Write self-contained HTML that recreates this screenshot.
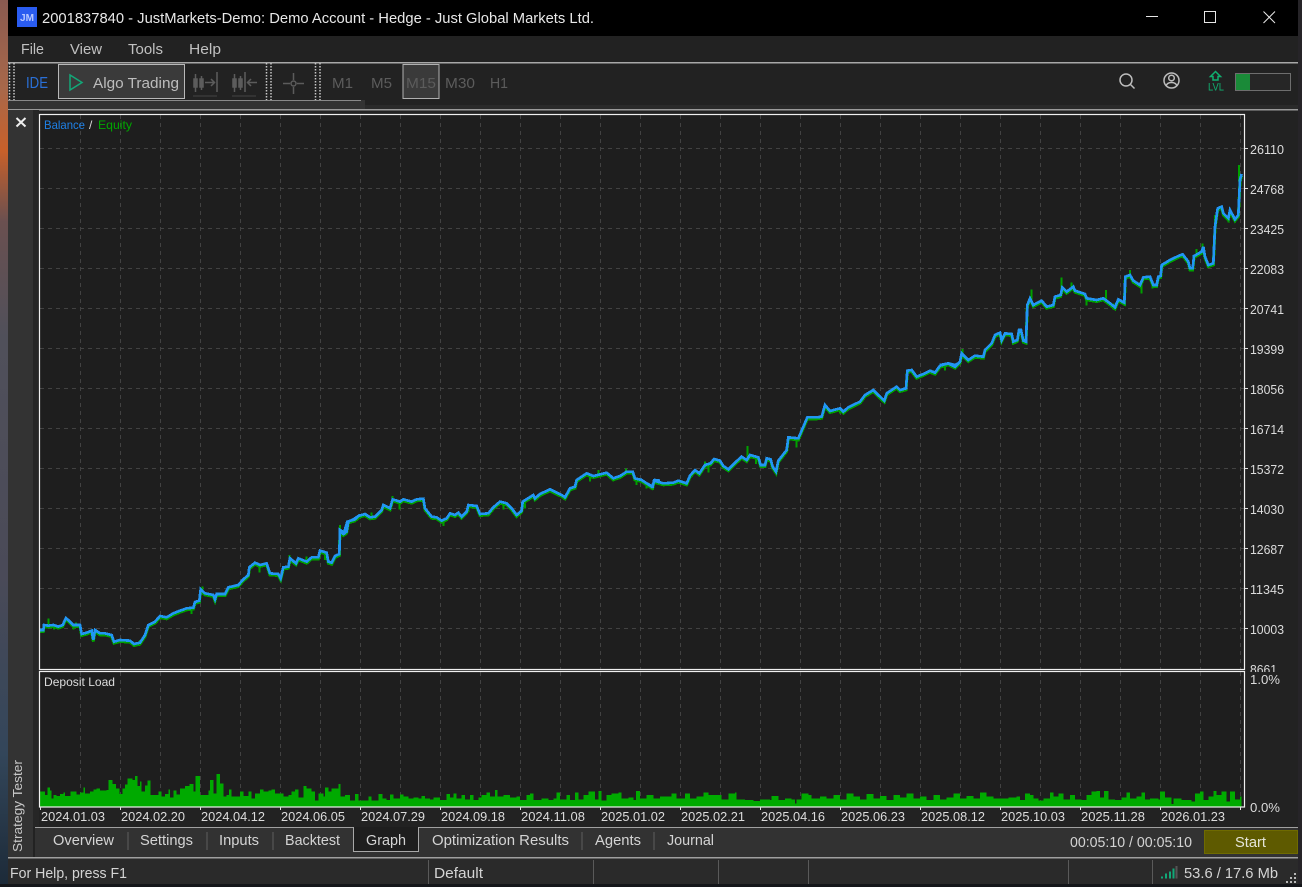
<!DOCTYPE html>
<html><head><meta charset="utf-8"><style>
html,body{margin:0;padding:0;background:#111;width:1302px;height:887px;overflow:hidden}
svg{display:block}
text{font-family:"Liberation Sans",sans-serif;white-space:pre}
.t{font-size:14.5px;fill:#d4d4d4}
.a{font-size:12.5px;fill:#dcdcdc}
.g{font-size:14.5px;fill:#5c5c5c}
</style></head><body>
<svg width="1302" height="887" viewBox="0 0 1302 887" xmlns="http://www.w3.org/2000/svg">
<defs>
<linearGradient id="wp" x1="0" y1="0" x2="0" y2="1">
<stop offset="0" stop-color="#8a5a50"/><stop offset=".1" stop-color="#a8684a"/><stop offset=".17" stop-color="#c8602a"/><stop offset=".25" stop-color="#6a5050"/><stop offset=".38" stop-color="#50505a"/><stop offset=".65" stop-color="#4a4a58"/><stop offset=".85" stop-color="#33465a"/><stop offset="1" stop-color="#1c2a38"/>
</linearGradient>
<polyline id="c1" fill="none" points="0,450 10,450 12,435 25,437 40,435 55,440 68,435 78,414 90,425 100,435 120,435 125,462 140,458 155,452 160,480 165,450 180,460 195,460 215,465 222,485 240,480 270,482 282,492 300,488 315,465 325,435 345,425 360,408 380,412 400,400 420,392 440,385 460,383 465,366 478,362 482,328 495,340 520,345 525,358 530,342 555,342 565,322 595,315 610,298 625,285 628,262 645,248 660,255 680,250 690,280 715,282 722,295 730,262 745,260 750,235 768,250 775,235 800,245 815,232 835,232 840,212 860,218 865,245 875,248 885,228 898,222 900,150 912,158 922,125 945,118 960,104"/>
<polyline id="c2" fill="none" points="0,335 10,342 20,335 25,305 40,298 55,288 75,282 90,292 105,290 125,270 130,255 150,265 158,238 180,245 190,238 215,245 230,238 250,236 255,265 275,290 290,292 305,302 320,295 330,280 345,285 355,278 365,290 380,275 385,255 410,258 420,282 445,280 460,262 480,245 500,250 515,265 530,285 545,272 548,245 580,225 585,235 600,222 630,208 665,225 675,232 690,205 705,200 710,180 740,160 760,168 800,158 820,175 840,168 860,155 878,155 885,175 905,180 935,200 945,180 960,182"/>
<polyline id="c3" fill="none" points="0,447 20,460 38,470 42,452 70,460 100,458 115,452 140,460 150,437 165,420 178,430 195,405 212,400 222,387 240,392 250,408 265,418 285,398 305,380 320,390 330,375 355,382 362,405 375,405 380,385 392,388 398,410 408,425 415,392 440,360 445,322 475,325 490,290 502,262 520,262 530,262 545,260 555,225 570,243 600,235 610,245 625,232 660,215 675,195 700,180 715,195 733,212 740,190 770,170 780,180 798,175 802,122 815,120 830,140 850,132 870,122 885,128 900,107 925,100 945,105 960,97"/>
<polyline id="c4" fill="none" points="0,645 25,640 45,650 60,635 65,610 85,630 105,617 130,620 135,600 155,580 165,555 180,548 185,570 195,550 215,552 220,575 232,570 237,540 243,540 250,572 258,575 262,465 270,445 280,465 305,452 320,470 340,465 345,440 362,435 367,412 380,425 400,410 405,422 435,432 440,445 470,450 490,445 510,460 525,472 535,448 553,458 556,380 570,375 580,392 600,405 610,382 630,380 640,405 650,405 655,380 662,378 665,345 690,330 715,318 728,313 745,335 750,355 758,355 762,318 785,305 790,290 795,320 805,345 820,340 825,230 833,175 845,170 850,190 865,205 870,180 885,208 895,195 900,90 905,72"/>
</defs>

<rect width="1302" height="887" fill="#17171a"/>
<rect x="0" y="0" width="8" height="887" fill="url(#wp)"/>
<rect x="1298" y="0" width="4" height="887" fill="#262428"/>
<rect x="0" y="884" width="1302" height="3" fill="#14161a"/>

<!-- window -->
<rect x="8" y="0" width="1290" height="884" fill="#222"/>
<rect x="8" y="0" width="1290" height="36" fill="#000"/>
<rect x="17" y="7" width="20" height="20" fill="#2a5cf0"/>
<text x="20" y="21" style="font-size:10px;font-weight:bold;fill:#b8c8ff" textLength="14" lengthAdjust="spacingAndGlyphs">JM</text>
<text x="42" y="23" style="font-size:15px;fill:#e8e8e8" textLength="552" lengthAdjust="spacingAndGlyphs">2001837840 - JustMarkets-Demo: Demo Account - Hedge - Just Global Markets Ltd.</text>
<path d="M1146 16.5H1158" stroke="#e6e6e6" stroke-width="1" fill="none"/>
<rect x="1204.5" y="11.5" width="11" height="11" stroke="#e6e6e6" stroke-width="1" fill="none"/>
<path d="M1263.5 11.5L1275 23M1275 11.5L1263.5 23" stroke="#e6e6e6" stroke-width="1" fill="none"/>

<!-- menu -->
<text class="t" x="21" y="54" textLength="23" lengthAdjust="spacingAndGlyphs" style="fill:#c0c0c0">File</text>
<text class="t" x="70" y="54" textLength="32" lengthAdjust="spacingAndGlyphs" style="fill:#c0c0c0">View</text>
<text class="t" x="128" y="54" textLength="35" lengthAdjust="spacingAndGlyphs" style="fill:#c0c0c0">Tools</text>
<text class="t" x="189" y="54" textLength="32" lengthAdjust="spacingAndGlyphs" style="fill:#c0c0c0">Help</text>

<!-- toolbar -->
<rect x="8" y="62" width="1290" height="1.5" fill="#a8a8a8"/>
<rect x="8" y="100" width="357" height="9" fill="#333"/>
<rect x="365" y="105" width="933" height="4" fill="#2a2a2a"/>
<rect x="8" y="100" width="353" height="1" fill="#8a8a8a"/>
<rect x="8" y="109" width="1290" height="1.5" fill="#9a9a9a"/>
<path d="M9.5 63V100M14 63V100M266.5 63V100M271 63V100M315.5 63V100M320 63V100" stroke="#c8c8c8" stroke-width="1.5" stroke-dasharray="1.5 1.5" fill="none"/>
<text x="26" y="88" style="font-size:16px;fill:#2a70d8" textLength="22" lengthAdjust="spacingAndGlyphs">IDE</text>
<rect x="58.5" y="64.5" width="126" height="34" fill="#3a3a3a" stroke="#b8b8b8" stroke-width="1"/>
<path d="M70 75V90L82 82.5Z" fill="none" stroke="#12a878" stroke-width="1.5"/>
<text x="93" y="88" style="font-size:15px;fill:#bdbdbd" textLength="86" lengthAdjust="spacingAndGlyphs">Algo Trading</text>
<g stroke="#5c5c5c" fill="none" stroke-width="1.5">
<path d="M194 79h3v8h-3zM195.5 74v18M200 79h3v8h-3zM201.5 76v14"/><path d="M205 82.5h9M211 79l3.500 3.500-3.500 3.500M217 72v20"/><path d="M193 96h24" stroke-width="1" stroke="#444"/>
<path d="M233 79h3v8h-3zM234.500 74v18M239 79h3v8h-3zM240.500 76v14"/><path d="M245 72v20"/><path d="M257 82.500h-9M251 79l-3.500 3.500 3.500 3.500"/><path d="M232 96h24" stroke-width="1" stroke="#444"/>
<path d="M283 83.500h7M297 83.500h7M293.500 73v7M293.500 87v7"/><circle cx="293.500" cy="83.500" r="2.500"/>
</g>
<text class="g" x="332" y="88" textLength="21" lengthAdjust="spacingAndGlyphs">M1</text>
<text class="g" x="371" y="88" textLength="21" lengthAdjust="spacingAndGlyphs">M5</text>
<rect x="403" y="64.500" width="36" height="34" fill="#3a3a3a" stroke="#b0b0b0" stroke-width="1"/>
<text class="g" x="406" y="88" textLength="30" lengthAdjust="spacingAndGlyphs">M15</text>
<text class="g" x="445" y="88" textLength="30" lengthAdjust="spacingAndGlyphs">M30</text>
<text class="g" x="490" y="88" textLength="18" lengthAdjust="spacingAndGlyphs">H1</text>

<g fill="none" stroke="#bdbdbd" stroke-width="1.500">
<circle cx="1126" cy="80" r="6"/><path d="M1130.500 84.500L1134.500 88.500"/>
<circle cx="1171.500" cy="80.500" r="7.500"/><circle cx="1171.500" cy="78" r="2.800"/><path d="M1166 86c1-3 3-3.500 5.500-3.500s4.500.5 5.500 3.500"/>
</g>
<path d="M1215.500 71.500L1220.500 76.500H1218V80H1213V76.500H1210.500Z" fill="none" stroke="#10b070" stroke-width="1.500"/>
<text x="1208" y="90.500" style="font-size:11px;fill:#10b070" textLength="16" lengthAdjust="spacingAndGlyphs">LVL</text>
<rect x="1235.500" y="73.500" width="55" height="17" fill="#262626" stroke="#6e6e6e" stroke-width="1"/>
<rect x="1236" y="74" width="14" height="16" fill="#1a8a38"/>

<!-- sidebar -->
<rect x="8" y="110" width="25" height="747" fill="#333"/>
<rect x="33" y="110" width="6" height="717" fill="#262626"/>
<path d="M16.500 118L25.500 126.500M25.500 118L16.500 126.500" stroke="#eee" stroke-width="2" fill="none"/>
<text transform="translate(22,852) rotate(-90)" style="font-size:12.500px;fill:#c8c8c8" textLength="92" lengthAdjust="spacingAndGlyphs">Strategy Tester</text>

<!-- chart panes -->
<rect x="39" y="114" width="1206" height="556" fill="#1e1e1e"/>
<rect x="39" y="671" width="1206" height="136" fill="#1e1e1e"/>
<path id="gv" stroke="#424242" stroke-width="1" stroke-dasharray="4 4" fill="none" d="M80.500 115V669M120.500 115V669M160.500 115V669M200.500 115V669M240.500 115V669M280.500 115V669M320.500 115V669M360.500 115V669M400.500 115V669M440.500 115V669M480.500 115V669M520.500 115V669M560.500 115V669M600.500 115V669M640.500 115V669M680.500 115V669M720.500 115V669M760.500 115V669M800.500 115V669M840.500 115V669M880.500 115V669M920.500 115V669M960.500 115V669M1000.500 115V669M1040.500 115V669M1080.500 115V669M1120.500 115V669M1160.500 115V669M1200.500 115V669M1240.500 115V669
M80.500 672V806M120.500 672V806M160.500 672V806M200.500 672V806M240.500 672V806M280.500 672V806M320.500 672V806M360.500 672V806M400.500 672V806M440.500 672V806M480.500 672V806M520.500 672V806M560.500 672V806M600.500 672V806M640.500 672V806M680.500 672V806M720.500 672V806M760.500 672V806M800.500 672V806M840.500 672V806M880.500 672V806M920.500 672V806M960.500 672V806M1000.500 672V806M1040.500 672V806M1080.500 672V806M1120.500 672V806M1160.500 672V806M1200.500 672V806M1240.500 672V806
M40 148.500H1244M40 188.500H1244M40 228.500H1244M40 268.500H1244M40 308.500H1244M40 348.500H1244M40 388.500H1244M40 428.500H1244M40 468.500H1244M40 508.500H1244M40 548.500H1244M40 588.500H1244M40 628.500H1244"/>

<!-- equity (green) -->
<g stroke="#00a000" stroke-width="9" fill="none" stroke-linejoin="miter" shape-rendering="crispEdges">
<use href="#c1" transform="translate(40,481.500) scale(.33333)"/>
<use href="#c2" transform="translate(340,421.500) scale(.33333)"/>
<use href="#c3" transform="translate(640,331.500) scale(.33333)"/>
<use href="#c4" transform="translate(940,151.500) scale(.33333)"/>
</g>
<g fill="none" stroke="#00a000" stroke-width="6" shape-rendering="crispEdges">
<path transform="translate(40,480) scale(.33333)" d="M25 415V435M42 435V448M100 430V448M108 428V440M125 455V470M178 455V468M222 480V492M300 480V496M455 385V402M488 320V335M525 350V364M658 255V278M748 225V245M800 230V250M855 222V240M900 135V160M910 150V166"/>
<path transform="translate(340,420) scale(.33333)" d="M0 316V340M95 278V292M158 228V245M178 245V268M310 300V318M385 262V276M490 245V268M555 250V265M750 165V185M775 150V165M858 145V160M890 175V195M920 190V206"/>
<path transform="translate(640,330) scale(.33333)" d="M20 460V476M195 395V412M205 405V428M323 348V385M348 385V402M440 350V368M470 330V352M600 235V250"/>
<path transform="translate(940,150) scale(.33333)" d="M15 645V662M68 597V625M365 382V425M275 418V450M395 397V420M440 440V466M498 420V450M520 460V478M570 360V385M605 405V431M638 395V416M865 200V218M825 195V240M897 45V95M788 280V310M770 297V320M820 305V340"/>
</g>
<!-- balance (blue) -->
<g stroke="#2196f3" stroke-width="8" fill="none" stroke-linejoin="miter" shape-rendering="crispEdges">
<use href="#c1" transform="translate(40,480) scale(.33333)"/>
<use href="#c2" transform="translate(340,420) scale(.33333)"/>
<use href="#c3" transform="translate(640,330) scale(.33333)"/>
<use href="#c4" transform="translate(940,150) scale(.33333)"/>
</g>

<!-- deposit load -->
<g fill="#00aa00" shape-rendering="crispEdges">
<path transform="translate(30,660) scale(.33333)" d="M28 440V395H45V405H52V382H60V392H65V415H70V405H80V408H90V402H100V398H105V408H122V394H140V404H150V398H160V382H165V400H180V395H190V388H200V386H210V392H230V390H235V360H247V372H258V385H268V402H278V385H285V373H292V355H308V360H315V348H322V378H330V365H335V395H345V376H352V362H362V405H385V395H395V410H405V402H415V388H420V412H430V392H440V404H450V385H465V378H478V372H490V395H497V348H510V405H520V405H535V392H540V360H550V400H560V342H570V370H580V410H590V405H597V388H605V410H630V395H640V408H655V395H665V415H675V400H690V388H700V395H715V392H725V388H735V400H750V400H760V410H775V405H785V395H795V388H805V412H820V378H830V385H845V395H855V422H865V400H880V410H885V382H895V395H905V385H925V372H932V410H945V405H960V422H975V402H985V422H1015V410H1025V422H1045V402H1058V415H1070V420H1080V404H1090V415H1110V404H1120V410H1135V415H1150V412H1165V415H1175V408H1185V415H1200V440Z"/>
<path transform="translate(420,740) scale(.33333)" d="M30 202V178H40V172H60V180H75V180H80V162H90V172H100V160H110V175H125V165H135V178H150V165H160V180H175V172H185V165H200V158H210V170H225V150H232V170H250V165H270V172H290V170H300V180H320V165H330V160H340V180H365V176H385V180H400V175H410V158H420V178H440V165H450V180H465V158H475V178H490V165H505V155H525V178H535V153H545V182H560V165H575V160H595V157H605V175H625V172H640V180H648V153H660V175H680V165H700V175H720V170H740V170H755V160H770V175H795V160H810V175H830V170H850V157H865V165H885V165H905V178H925V160H945V158H950V178H975V180H1000V183H1020V178H1050V180H1055V168H1075V180H1095V175H1115V178H1125V190H1130V178H1145V160H1165V165H1175V175H1200V202Z"/>
<path transform="translate(820,740) scale(.33333)" d="M0 202V170H20V175H40V165H60V178H80V160H100V170H120V178H140V162H160V175H180V168H200V180H220V165H240V172H260V160H280V175H300V170H320V180H340V165H360V178H380V172H400V160H420V175H440V168H460V175H480V158H500V170H520V175H540V202Z"/>
<path transform="translate(1000,740) scale(.33333)" d="M0 202V175H25V172H50V170H60V180H75V160H90V165H100V175H115V182H130V175H150V158H160V170H175V160H190V178H210V165H225V178H245V180H260V165H275V155H290V153H300V172H312V153H325V178H345V180H365V172H380V158H390V175H410V170H425V157H435V178H450V175H475V178H480V155H495V172H515V192H520V175H545V180H575V185H585V160H600V155H610V180H625V170H640V153H650V165H665V155H680V185H690V155H705V178H720V170H725V202Z"/>
</g>

<!-- frames -->
<rect x="39.500" y="114.500" width="1205" height="555" fill="none" stroke="#f0f0f0" stroke-width="1.200"/>
<rect x="39.500" y="671.500" width="1205" height="135.500" fill="none" stroke="#f0f0f0" stroke-width="1.200"/>
<path d="M1245 148.500h3M1245 188.500h3M1245 228.500h3M1245 268.500h3M1245 308.500h3M1245 348.500h3M1245 388.500h3M1245 428.500h3M1245 468.500h3M1245 508.500h3M1245 548.500h3M1245 588.500h3M1245 628.500h3M40.500 807v3M120.500 807v3M200.500 807v3M280.500 807v3M360.500 807v3M440.500 807v3M520.500 807v3M600.500 807v3M680.500 807v3M760.500 807v3M840.500 807v3M920.500 807v3M1000.500 807v3M1080.500 807v3M1160.500 807v3M1240.500 807v3" stroke="#e0e0e0" stroke-width="1" fill="none"/>

<text x="44" y="129" style="font-size:12px;fill:#1e80e6" textLength="41" lengthAdjust="spacingAndGlyphs">Balance</text>
<text x="89" y="129" style="font-size:12px;fill:#ddd">/</text>
<text x="98" y="129" style="font-size:12px;fill:#00a800" textLength="34" lengthAdjust="spacingAndGlyphs">Equity</text>
<text x="44" y="686" style="font-size:12px;fill:#dcdcdc" textLength="71" lengthAdjust="spacingAndGlyphs">Deposit Load</text>

<!-- right axis -->
<g class="ax">
<text class="a" x="1250" y="154" textLength="34" lengthAdjust="spacingAndGlyphs">26110</text>
<text class="a" x="1250" y="194" textLength="34" lengthAdjust="spacingAndGlyphs">24768</text>
<text class="a" x="1250" y="234" textLength="34" lengthAdjust="spacingAndGlyphs">23425</text>
<text class="a" x="1250" y="274" textLength="34" lengthAdjust="spacingAndGlyphs">22083</text>
<text class="a" x="1250" y="314" textLength="34" lengthAdjust="spacingAndGlyphs">20741</text>
<text class="a" x="1250" y="354" textLength="34" lengthAdjust="spacingAndGlyphs">19399</text>
<text class="a" x="1250" y="394" textLength="34" lengthAdjust="spacingAndGlyphs">18056</text>
<text class="a" x="1250" y="434" textLength="34" lengthAdjust="spacingAndGlyphs">16714</text>
<text class="a" x="1250" y="474" textLength="34" lengthAdjust="spacingAndGlyphs">15372</text>
<text class="a" x="1250" y="514" textLength="34" lengthAdjust="spacingAndGlyphs">14030</text>
<text class="a" x="1250" y="554" textLength="34" lengthAdjust="spacingAndGlyphs">12687</text>
<text class="a" x="1250" y="594" textLength="34" lengthAdjust="spacingAndGlyphs">11345</text>
<text class="a" x="1250" y="634" textLength="34" lengthAdjust="spacingAndGlyphs">10003</text>
<text class="a" x="1250" y="674" textLength="27" lengthAdjust="spacingAndGlyphs">8661</text>
<rect x="1246" y="672" width="52" height="3" fill="#222"/>
<text class="a" x="1250" y="684" textLength="30" lengthAdjust="spacingAndGlyphs">1.0%</text>
<text class="a" x="1250" y="812" textLength="30" lengthAdjust="spacingAndGlyphs">0.0%</text>
</g>

<!-- date axis -->
<text class="a" x="41" y="821" textLength="64" lengthAdjust="spacingAndGlyphs">2024.01.03</text>
<text class="a" x="121" y="821" textLength="64" lengthAdjust="spacingAndGlyphs">2024.02.20</text>
<text class="a" x="201" y="821" textLength="64" lengthAdjust="spacingAndGlyphs">2024.04.12</text>
<text class="a" x="281" y="821" textLength="64" lengthAdjust="spacingAndGlyphs">2024.06.05</text>
<text class="a" x="361" y="821" textLength="64" lengthAdjust="spacingAndGlyphs">2024.07.29</text>
<text class="a" x="441" y="821" textLength="64" lengthAdjust="spacingAndGlyphs">2024.09.18</text>
<text class="a" x="521" y="821" textLength="64" lengthAdjust="spacingAndGlyphs">2024.11.08</text>
<text class="a" x="601" y="821" textLength="64" lengthAdjust="spacingAndGlyphs">2025.01.02</text>
<text class="a" x="681" y="821" textLength="64" lengthAdjust="spacingAndGlyphs">2025.02.21</text>
<text class="a" x="761" y="821" textLength="64" lengthAdjust="spacingAndGlyphs">2025.04.16</text>
<text class="a" x="841" y="821" textLength="64" lengthAdjust="spacingAndGlyphs">2025.06.23</text>
<text class="a" x="921" y="821" textLength="64" lengthAdjust="spacingAndGlyphs">2025.08.12</text>
<text class="a" x="1001" y="821" textLength="64" lengthAdjust="spacingAndGlyphs">2025.10.03</text>
<text class="a" x="1081" y="821" textLength="64" lengthAdjust="spacingAndGlyphs">2025.11.28</text>
<text class="a" x="1161" y="821" textLength="64" lengthAdjust="spacingAndGlyphs">2026.01.23</text>

<!-- tabs -->
<rect x="35" y="827" width="1263" height="30" fill="#323232"/>
<rect x="35" y="827" width="319" height="1" fill="#a0a0a0"/>
<rect x="418" y="827" width="880" height="1" fill="#a0a0a0"/>
<path d="M353.500 827V851.500H418.500V827" fill="#1e1e1e" stroke="#a8a8a8" stroke-width="1"/>
<path d="M128 832V850M207 832V850M273 832V850M582 832V850M654 832V850" stroke="#5e5e5e" stroke-width="1"/>
<text class="t" x="53" y="845" textLength="61" lengthAdjust="spacingAndGlyphs">Overview</text>
<text class="t" x="140" y="845" textLength="53" lengthAdjust="spacingAndGlyphs">Settings</text>
<text class="t" x="219" y="845" textLength="40" lengthAdjust="spacingAndGlyphs">Inputs</text>
<text class="t" x="285" y="845" textLength="55" lengthAdjust="spacingAndGlyphs">Backtest</text>
<text class="t" x="366" y="845" textLength="40" lengthAdjust="spacingAndGlyphs">Graph</text>
<text class="t" x="432" y="845" textLength="137" lengthAdjust="spacingAndGlyphs">Optimization Results</text>
<text class="t" x="595" y="845" textLength="46" lengthAdjust="spacingAndGlyphs">Agents</text>
<text class="t" x="667" y="845" textLength="47" lengthAdjust="spacingAndGlyphs">Journal</text>
<text class="t" x="1070" y="847" textLength="122" lengthAdjust="spacingAndGlyphs">00:05:10 / 00:05:10</text>
<rect x="1204.500" y="830.500" width="93" height="23" fill="#5e5a00" stroke="#6e6a00" stroke-width="1"/>
<text class="t" x="1235" y="847" textLength="31" lengthAdjust="spacingAndGlyphs" style="fill:#e4e4d8">Start</text>

<!-- status -->
<rect x="8" y="857" width="1290" height="1.500" fill="#a0a0a0"/>
<rect x="8" y="858.500" width="1290" height="25.500" fill="#2a2a2a"/>
<path d="M428.500 860V884M593.500 860V884M718.500 860V884M808.500 860V884M1068.500 860V884M1152.500 860V884" stroke="#5a5a5a" stroke-width="1"/>
<text class="t" x="10" y="878" textLength="117" lengthAdjust="spacingAndGlyphs">For Help, press F1</text>
<text class="t" x="434" y="878" textLength="49" lengthAdjust="spacingAndGlyphs">Default</text>
<path d="M1161 878.500h2v-2h-2zM1165 878.500h2v-5h-2zM1169 878.500h2v-7h-2zM1172.500 878.500h2v-10h-2z" fill="#12a878"/>
<rect x="1175.500" y="866" width="2" height="12.500" fill="#555"/>
<text class="t" x="1184" y="878" textLength="94" lengthAdjust="spacingAndGlyphs">53.6 / 17.6 Mb</text>
<path d="M1294 873h2v2h-2zM1290 877h2v2h-2zM1294 877h2v2h-2zM1286 881h2v2h-2zM1290 881h2v2h-2zM1294 881h2v2h-2z" fill="#b8b8b8"/>
</svg>
</body></html>
